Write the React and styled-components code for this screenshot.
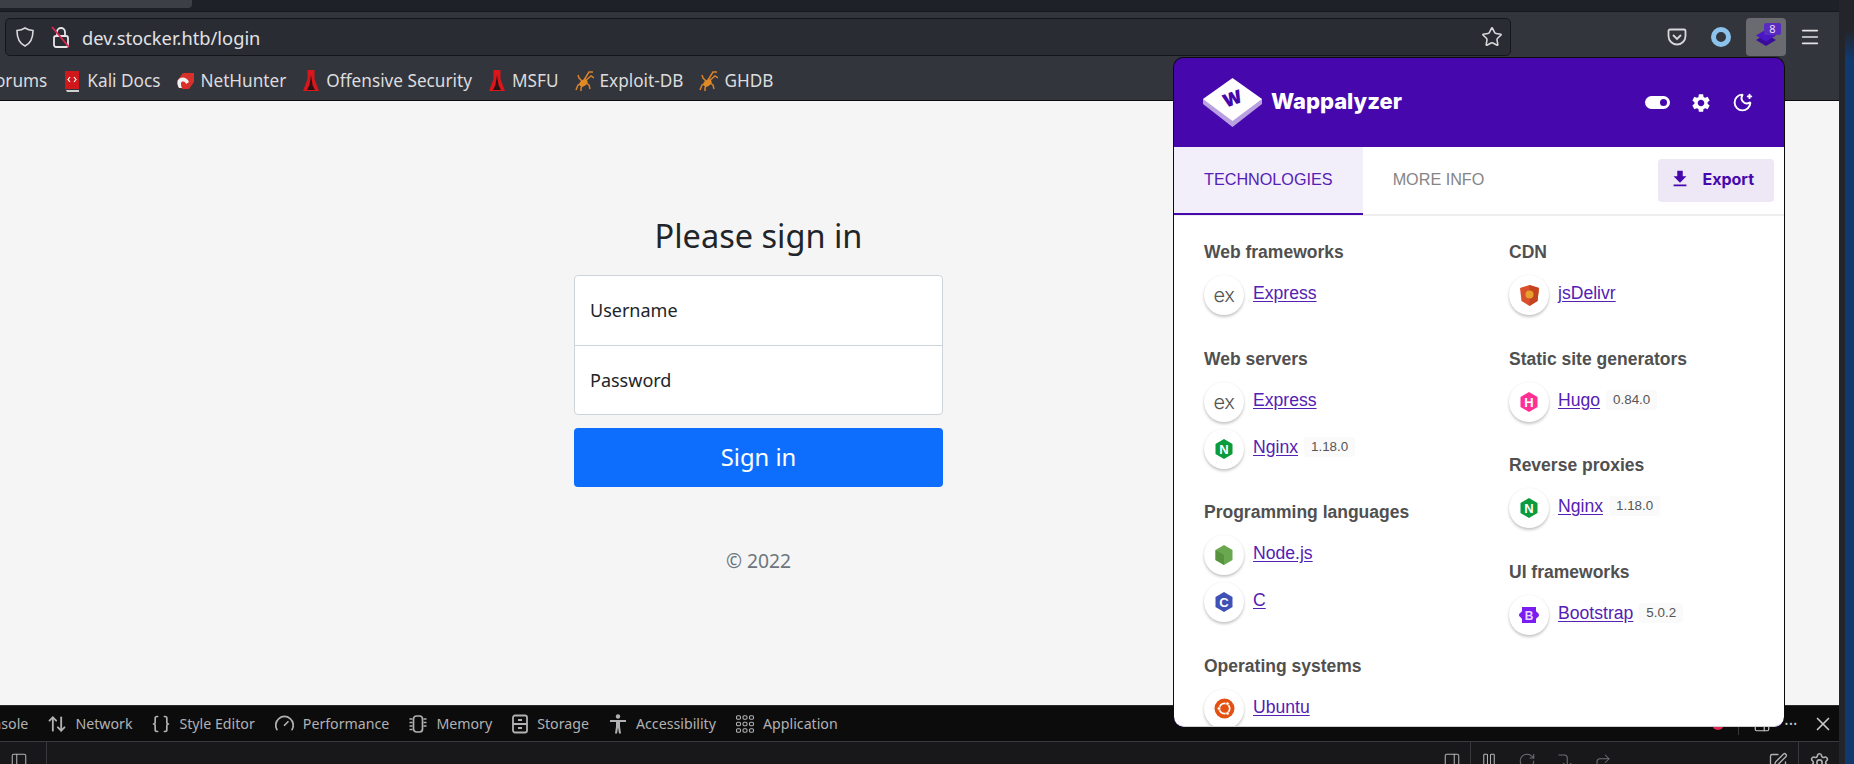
import React from "react";
import styled, { createGlobalStyle } from "styled-components";
import {
  ArrowUpDown,
  Braces,
  CornerRightDown,
  CornerUpRight,
  Gauge,
  Menu,
  MoonStar,
  PanelLeft,
  PanelRight,
  Pause,
  RotateCw,
  Settings,
  SquarePen,
  Star,
  X,
} from "lucide-react";

const GlobalStyle = createGlobalStyle`
  html, body {
    margin: 0;
    padding: 0;
    background: #0c0c0d;
    overflow: hidden;
  }
  * {
    box-sizing: border-box;
  }
`;

const PURPLE = "#4608ad";
const LINK = "#5520b4";
const UI_FONT = `"Noto Sans", "DejaVu Sans", sans-serif`;
const POPUP_FONT = `"Liberation Sans", Arial, sans-serif`;

const BookmarkIcon = ({ kind }) => {
  if (kind === "book") {
    return (
      <svg width="18" height="24" viewBox="0 0 18 24">
        <path d="M2 2h14v18H4a2 2 0 0 0-2 2z" fill="#d0171b" />
        <path d="M3 21h13v2H4z" fill="#cfcfcf" />
        <path d="M7 8l-2 2.500 2 2.500M11 8l2 2.500-2 2.500" stroke="#fff" strokeWidth="1.2" fill="none" />
      </svg>
    );
  }
  if (kind === "hunter") {
    return (
      <svg width="18" height="18" viewBox="0 0 18 18">
        <path d="M7 1h11v9l-5 7H6L1 9z" fill="#d9302c" />
        <path d="M2 8c3-4 9-3 11 2l-3 2c-1-3-4-3-5-1 0 2 0 3 1 5H3C1 13 1 10 2 8z" fill="#f2f2f2" />
      </svg>
    );
  }
  if (kind === "torch") {
    return (
      <svg width="18" height="24" viewBox="0 0 18 24">
        <path d="M5.500 1h7v9l4.500 12H1L5.500 10z" fill="#d8161b" />
        <path d="M9 6l1.500 10 2.500 5H5l2.500-5z" fill="#2a1214" />
      </svg>
    );
  }
  return (
    <svg width="19" height="22" viewBox="0 0 19 22">
      <g stroke="#d9822b" strokeWidth="1.500" fill="none">
        <path d="M9 10L14 2l4 0M10 11L16 6l3 2M8 13L3 15l-2 5M8 14l-2 4 0 3M11 13l3 2 1 4M7 11L4 8 3 5" />
      </g>
      <ellipse cx="8.500" cy="13" rx="4.500" ry="3" fill="#e08a24" transform="rotate(-35 8.500 13)" />
    </svg>
  );
};

const bookmarks = [
  { kind: "book", label: "Kali Docs" },
  { kind: "hunter", label: "NetHunter" },
  { kind: "torch", label: "Offensive Security" },
  { kind: "torch", label: "MSFU" },
  { kind: "spider", label: "Exploit-DB" },
  { kind: "spider", label: "GHDB" },
];

const MemoryIcon = () => (
  <svg width="20" height="20" viewBox="0 0 20 20" fill="none" stroke="currentColor" strokeWidth="1.700">
    <rect x="5.500" y="2" width="9" height="16" rx="3" />
    <path d="M1.500 5h3M1.500 8.500h3M1.500 12h3M1.500 15.500h3M15.500 5h3M15.500 8.500h3M15.500 12h3" strokeWidth="1.300" />
  </svg>
);

const StorageIcon = () => (
  <svg width="18" height="20" viewBox="0 0 18 20" fill="none" stroke="currentColor" strokeWidth="1.800">
    <rect x="2" y="1.500" width="14" height="17" rx="2" />
    <path d="M2 10h14M7 6h4M7 14h4" />
  </svg>
);

const PersonIcon = () => (
  <svg width="20" height="20" viewBox="0 0 20 20" fill="currentColor">
    <circle cx="10" cy="2.500" r="2.200" />
    <path d="M2 6h16v2h-6v4.500l1 7h-2l-1-6-1 6H7l1-7V8H2z" />
  </svg>
);

const AppGridIcon = () => (
  <svg width="20" height="20" viewBox="0 0 20 20" fill="none" stroke="currentColor" strokeWidth="1.100">
    {[3.500, 10, 16.500].map((y) =>
      [3.500, 10, 16.500].map((x) => <rect key={`${x}-${y}`} x={x - 2} y={y - 1.700} width="4" height="3.400" rx="1.200" />)
    )}
  </svg>
);

const devTabs = [
  { icon: <ArrowUpDown size={20} strokeWidth={2.200} />, label: "Network" },
  { icon: <Braces size={20} strokeWidth={2} />, label: "Style Editor" },
  { icon: <Gauge size={21} strokeWidth={2} />, label: "Performance" },
  { icon: <MemoryIcon />, label: "Memory" },
  { icon: <StorageIcon />, label: "Storage" },
  { icon: <PersonIcon />, label: "Accessibility" },
  { icon: <AppGridIcon />, label: "Application" },
];

const Hexagon = ({ fill, letter, color = "#fff" }) => (
  <svg width="20" height="22" viewBox="0 0 20 22">
    <path d="M10 1l8.500 5v10L10 21l-8.500-5V6z" fill={fill} />
    <text x="10" y="15.500" textAnchor="middle" fontSize="13" fontWeight="700" fontFamily="Liberation Sans" fill={color}>
      {letter}
    </text>
  </svg>
);

const TechIcon = ({ name }) => {
  switch (name) {
    case "Express":
      return <ExLogo>ex</ExLogo>;
    case "Nginx":
      return <Hexagon fill="#0a9b3c" letter="N" />;
    case "Node.js":
      return (
        <svg width="20" height="22" viewBox="0 0 20 22">
          <path d="M10 1l8.500 5v10L10 21l-8.500-5V6z" fill="#6aa84f" />
          <path d="M1.500 6L10 11v10l-8.500-5z" fill="#57933f" />
        </svg>
      );
    case "C":
      return <Hexagon fill="#3f51b5" letter="C" />;
    case "Ubuntu":
      return (
        <svg width="21" height="21" viewBox="0 0 21 21">
          <circle cx="10.500" cy="10.500" r="10" fill="#e4500f" />
          <circle cx="10.500" cy="10.500" r="5.200" fill="none" stroke="#fff" strokeWidth="1.700" />
          <circle cx="5" cy="10.500" r="1.700" fill="#fff" stroke="#e4500f" strokeWidth=".6" />
          <circle cx="13.500" cy="5.600" r="1.700" fill="#fff" stroke="#e4500f" strokeWidth=".6" />
          <circle cx="13.500" cy="15.400" r="1.700" fill="#fff" stroke="#e4500f" strokeWidth=".6" />
        </svg>
      );
    case "jsDelivr":
      return (
        <svg width="19" height="21" viewBox="0 0 19 21">
          <path d="M9.500 0L19 3l-1.500 13-8 5-8-5L0 3z" fill="#d9512c" />
          <path d="M9.500 0L19 3l-1.500 13-8 5z" fill="#c4441f" />
          <circle cx="9.500" cy="9.500" r="4" fill="#e8a02c" />
        </svg>
      );
    case "Hugo":
      return <Hexagon fill="#ff2f93" letter="H" />;
    default:
      return (
        <svg width="20" height="18" viewBox="0 0 20 18">
          <path d="M3 1h14v3.500c0 2 3 2 3 4.500s-3 2.500-3 4.500V17H3v-3.500c0-2-3-2.500-3-4.500s3-2.500 3-4.500z" fill="#7a1df0" />
          <text x="10" y="13.500" textAnchor="middle" fontSize="12" fontWeight="700" fontFamily="Liberation Sans" fill="#e8d8ff">
            B
          </text>
        </svg>
      );
  }
};

const leftColumn = [
  { title: "Web frameworks", items: [{ name: "Express" }] },
  { title: "Web servers", items: [{ name: "Express" }, { name: "Nginx", version: "1.18.0" }] },
  { title: "Programming languages", items: [{ name: "Node.js" }, { name: "C" }] },
  { title: "Operating systems", items: [{ name: "Ubuntu" }] },
];

const rightColumn = [
  { title: "CDN", items: [{ name: "jsDelivr" }] },
  { title: "Static site generators", items: [{ name: "Hugo", version: "0.84.0" }] },
  { title: "Reverse proxies", items: [{ name: "Nginx", version: "1.18.0" }] },
  { title: "UI frameworks", items: [{ name: "Bootstrap", version: "5.0.2" }] },
];

const TechColumn = ({ sections }) => (
  <Column>
    {sections.map((section) => (
      <section key={section.title}>
        <SectionTitle>{section.title}</SectionTitle>
        <Rows>
          {section.items.map((item) => (
            <TechRow key={item.name}>
              <IconDisc>
                <TechIcon name={item.name} />
              </IconDisc>
              <TechLink href="#">{item.name}</TechLink>
              {item.version && <Version>{item.version}</Version>}
            </TechRow>
          ))}
        </Rows>
      </section>
    ))}
  </Column>
);

const App = () => {
  return (
    <Screen>
      <GlobalStyle />
      <Browser>
        <TabStrip>
          <ActiveTab />
        </TabStrip>

        <NavBar>
          <UrlBar>
            <svg width="20" height="22" viewBox="0 0 20 22" fill="none" stroke="#d8d8da" strokeWidth="1.600">
              <path d="M10 2c2.500 1.600 5 2.300 8 2.500 0 7-1.500 12.500-8 15.500C3.500 17 2 11.500 2 4.500 5 4.300 7.500 3.600 10 2z" />
            </svg>
            <LockIcon width="20" height="24" viewBox="0 0 20 24" fill="none">
              <rect x="3" y="11" width="14" height="11" rx="2" stroke="#e6e6e8" strokeWidth="1.800" />
              <path d="M6 11V7a4 4 0 0 1 8 0v4" stroke="#e6e6e8" strokeWidth="1.800" />
              <path d="M1 2l17 20" stroke="#e22850" strokeWidth="1.800" />
            </LockIcon>
            <UrlText>dev.stocker.htb/login</UrlText>
            <Star size={22} color="#d8d8da" strokeWidth={1.700} />
          </UrlBar>
          <Toolbar>
            <svg width="20" height="18" viewBox="0 0 20 18" fill="none" stroke="#d8d8da" strokeWidth="1.800">
              <path d="M3 1.500h14a1.500 1.500 0 0 1 1.500 1.500v5a8.500 8.500 0 0 1-17 0V3A1.500 1.500 0 0 1 3 1.500z" />
              <path d="M6 7l4 4 4-4" />
            </svg>
            <Ring />
            <ExtensionButton>
              <svg width="22" height="22" viewBox="0 0 22 22">
                <path d="M1 13l10-6 10 6-10 6z" fill="#3a0c9c" />
                <path d="M1 8.500l10-6 10 6-10 6z" fill="#4b16c4" />
              </svg>
              <Badge>8</Badge>
            </ExtensionButton>
            <Menu size={22} color="#e4e4e6" strokeWidth={1.800} />
          </Toolbar>
        </NavBar>

        <BookmarksBar>
          <FirstBookmark>Forums</FirstBookmark>
          {bookmarks.map((bookmark) => (
            <Bookmark key={bookmark.label}>
              <BookmarkIcon kind={bookmark.kind} />
              {bookmark.label}
            </Bookmark>
          ))}
        </BookmarksBar>

        <Page>
          <SignInForm>
            <Heading>Please sign in</Heading>
            <FieldGroup>
              <Field>Username</Field>
              <Field>Password</Field>
            </FieldGroup>
            <SubmitButton>Sign in</SubmitButton>
            <Copyright>© 2022</Copyright>
          </SignInForm>
        </Page>

        <DevTabs>
          <FirstDevTab>Console</FirstDevTab>
          {devTabs.map((tab) => (
            <DevTab key={tab.label}>
              {tab.icon}
              {tab.label}
            </DevTab>
          ))}
          <DevTabActions>
            <ErrorDot />
            <DevDivider />
            <PanelRight size={18} strokeWidth={1.600} />
            <Dots>•••</Dots>
            <X size={22} strokeWidth={1.800} />
          </DevTabActions>
        </DevTabs>

        <DevToolbar>
          <ToolbarEdge>
            <PanelLeft size={18} strokeWidth={1.400} />
          </ToolbarEdge>
          <DebugControls>
            <PanelRight size={18} strokeWidth={1.400} />
            <DevDivider />
            <Steppers>
              <Pause size={18} strokeWidth={1.400} />
              <RotateCw size={18} strokeWidth={1.400} />
              <CornerRightDown size={18} strokeWidth={1.400} />
              <CornerUpRight size={18} strokeWidth={1.400} />
            </Steppers>
          </DebugControls>
          <ToolbarEnd>
            <SquarePen size={20} strokeWidth={1.600} />
            <DevDivider />
            <Settings size={21} strokeWidth={1.800} />
          </ToolbarEnd>
        </DevToolbar>

        <Popup>
          <PopupHeader>
            <LogoMark width="59" height="50" viewBox="0 0 59 50">
              <path d="M0 26V21h59v5L29.500 49z" fill="#b9a0e0" />
              <path d="M0 21L29.500 0 59 21 29.500 43z" fill="#fff" />
              <text
                x="29.500"
                y="27"
                textAnchor="middle"
                fontSize="18"
                fontWeight="900"
                fontFamily="Inter"
                fill={PURPLE}
                transform="rotate(-20 29.500 21)"
              >
                W
              </text>
            </LogoMark>
            <LogoText>Wappalyzer</LogoText>
            <HeaderActions>
              <Toggle />
              <svg width="22" height="22" viewBox="0 0 24 24" fill="#fff">
                <path d="M19.140 12.940c.04-.3.06-.61.06-.94 0-.32-.02-.64-.07-.94l2.030-1.580c.18-.14.23-.41.12-.61l-1.920-3.320c-.12-.22-.37-.29-.59-.22l-2.390.96c-.5-.38-1.030-.7-1.620-.94l-.36-2.540c-.04-.24-.24-.41-.48-.41h-3.840c-.24 0-.43.17-.47.41l-.36 2.540c-.59.24-1.130.57-1.620.94l-2.390-.96c-.22-.08-.47 0-.59.22L2.740 8.870c-.12.21-.08.47.12.61l2.030 1.580c-.05.3-.09.63-.09.94s.02.64.07.94l-2.030 1.580c-.18.14-.23.41-.12.61l1.920 3.320c.12.22.37.29.59.22l2.390-.96c.5.38 1.030.7 1.620.94l.36 2.540c.05.24.24.41.48.41h3.840c.24 0 .44-.17.47-.41l.36-2.540c.59-.24 1.130-.56 1.620-.94l2.390.96c.22.08.47 0 .59-.22l1.920-3.320c.12-.22.07-.47-.12-.61l-2.010-1.580zM12 15.600c-1.980 0-3.600-1.620-3.600-3.600s1.620-3.600 3.600-3.600 3.600 1.620 3.600 3.600-1.620 3.600-3.600 3.600z" />
              </svg>
              <MoonStar size={21} color="#fff" strokeWidth={2.200} />
            </HeaderActions>
          </PopupHeader>

          <PopupBody>
            <PopupTabs>
              <PopupTab $active>TECHNOLOGIES</PopupTab>
              <PopupTab>MORE INFO</PopupTab>
              <ExportButton>
                <svg width="22" height="22" viewBox="0 0 24 24" fill={PURPLE}>
                  <path d="M5 20h14v-2H5v2zM19 9h-4V3H9v6H5l7 7 7-7z" />
                </svg>
                Export
              </ExportButton>
            </PopupTabs>
            <Columns>
              <TechColumn sections={leftColumn} />
              <TechColumn sections={rightColumn} />
            </Columns>
          </PopupBody>
        </Popup>
      </Browser>
      <DesktopEdge />
    </Screen>
  );
};

export default App;

const Screen = styled.div`
  display: flex;
  width: 1854px;
  height: 764px;
  overflow: hidden;
  background: #24252b;
`;

const Browser = styled.div`
  position: relative;
  display: flex;
  flex: none;
  flex-direction: column;
  width: 1839px;
  height: 764px;
  overflow: hidden;
  font-family: ${UI_FONT};
`;

const DesktopEdge = styled.div`
  flex: none;
  width: 9px;
  margin-left: 6px;
  background: linear-gradient(#24252b 0, #24252b 30px, #103a6e 60px, #103a6e 100%);
`;

const TabStrip = styled.div`
  height: 12px;
  flex: none;
  background: #1f2128;
  border-bottom: 1px solid #17181d;
`;

const ActiveTab = styled.div`
  width: 192px;
  height: 8px;
  background: #3d3f47;
  border-bottom-right-radius: 4px;
`;

const NavBar = styled.div`
  display: flex;
  align-items: center;
  height: 45px;
  flex: none;
  padding: 6px 0 1px 5px;
  background: #33353c;
`;

const UrlBar = styled.div`
  display: flex;
  flex: none;
  align-items: center;
  width: 1506px;
  height: 38px;
  padding: 0 7px 0 9px;
  background: #2a2c34;
  border: 1px solid #15161b;
  border-radius: 5px;
`;

const LockIcon = styled.svg`
  margin-left: 16px;
`;

const UrlText = styled.span`
  flex: 1;
  margin-left: 11px;
  color: #e2e2e4;
  font-size: 18.300px;
`;

const Toolbar = styled.div`
  display: flex;
  align-items: center;
  gap: 24px;
  margin-left: 156px;
`;

const Ring = styled.span`
  width: 20px;
  height: 20px;
  border: 5px solid #8cc3ec;
  border-radius: 50%;
`;

const ExtensionButton = styled.div`
  position: relative;
  display: flex;
  align-items: flex-end;
  justify-content: center;
  width: 40px;
  height: 38px;
  margin: 0 -11px 0 -9px;
  padding-bottom: 7px;
  background: #6a6b70;
  border-radius: 4px;
`;

const Badge = styled.span`
  position: absolute;
  top: 5px;
  right: 5px;
  width: 17px;
  height: 12px;
  background: #5a2bc0;
  border-radius: 2px;
  color: #e6defa;
  font-size: 11px;
  line-height: 12px;
  text-align: center;
`;

const BookmarksBar = styled.div`
  display: flex;
  align-items: center;
  gap: 16px;
  height: 44px;
  flex: none;
  padding-top: 4px;
  background: #33353c;
  border-bottom: 1px solid #0c0c0d;
  color: #dcdcde;
  font-size: 17.200px;
  white-space: nowrap;
`;

const FirstBookmark = styled.span`
  margin-left: -14px;
`;

const Bookmark = styled.span`
  display: flex;
  align-items: center;
  gap: 6px;
`;

const Page = styled.main`
  flex: 1;
  padding: 117px 0 0 574px;
  background: #f5f5f5;
`;

const SignInForm = styled.div`
  display: flex;
  flex-direction: column;
  width: 369px;
  color: #212529;
  text-align: center;
`;

const Heading = styled.h1`
  margin: 0 0 21px;
  font-size: 32.500px;
  font-weight: 400;
  line-height: 36px;
`;

const FieldGroup = styled.div`
  background: #fff;
  border: 1px solid #ced4da;
  border-radius: 4px;
`;

const Field = styled.div`
  height: 69px;
  padding-left: 15px;
  font-size: 18px;
  line-height: 68px;
  text-align: left;

  & + & {
    border-top: 1px solid #ced4da;
  }
`;

const SubmitButton = styled.button`
  height: 59px;
  margin-top: 13px;
  padding: 0 0 2px;
  background: #0d6efd;
  border: 0;
  border-radius: 4px;
  color: #fff;
  font-family: inherit;
  font-size: 23.800px;
`;

const Copyright = styled.p`
  margin: 63px 0 0;
  color: #6c757d;
  font-size: 19.300px;
  line-height: 22px;
`;

const DevTabs = styled.div`
  display: flex;
  align-items: center;
  gap: 19px;
  height: 37px;
  flex: none;
  background: #0c0c0d;
  border-top: 1px solid #2a2a2e;
  border-bottom: 1px solid #38383d;
  color: #b1b1b3;
  font-size: 14.200px;
  white-space: nowrap;
`;

const FirstDevTab = styled.span`
  margin-left: -25px;
`;

const DevTab = styled.span`
  display: flex;
  align-items: center;
  gap: 8px;
`;

const DevTabActions = styled.div`
  display: flex;
  align-items: center;
  gap: 14px;
  margin-left: auto;
  padding-right: 5px;
  color: #c8c8ca;
`;

const ErrorDot = styled.span`
  width: 12px;
  height: 12px;
  background: #e22850;
  border-radius: 50%;
`;

const DevDivider = styled.span`
  width: 1px;
  height: 22px;
  background: #38383d;
`;

const Dots = styled.span`
  font-size: 9px;
  letter-spacing: 1px;
`;

const DevToolbar = styled.div`
  display: flex;
  align-items: flex-start;
  height: 22px;
  flex: none;
  overflow: hidden;
  background: #18181a;
  color: #b1b1b3;
`;

const ToolbarEdge = styled.div`
  width: 47px;
  height: 22px;
  margin-right: 1396px;
  padding: 10px 0 0 10px;
  border-right: 1px solid #38383d;
`;

const DebugControls = styled.div`
  display: flex;
  align-items: flex-start;
  gap: 9px;
  padding-top: 10px;

  > span {
    margin-top: -10px;
  }
`;

const Steppers = styled.div`
  display: flex;
  gap: 20px;
  color: #6f6f74;

  > :first-child {
    color: #b1b1b3;
  }
`;

const ToolbarEnd = styled.div`
  display: flex;
  align-items: flex-start;
  gap: 10px;
  margin-left: auto;
  padding: 10px 9px 0 0;

  > span {
    margin-top: -10px;
  }
`;

const Popup = styled.div`
  position: absolute;
  top: 57px;
  left: 1173px;
  display: flex;
  flex-direction: column;
  width: 612px;
  height: 670px;
  overflow: hidden;
  background: ${PURPLE};
  border: 1px solid #0c0c0d;
  border-bottom: 0;
  border-radius: 10px;
  font-family: ${POPUP_FONT};
`;

const PopupHeader = styled.header`
  display: flex;
  align-items: center;
  height: 89px;
  flex: none;
  padding: 0 31px 0 29px;
  color: #fff;
`;

const LogoMark = styled.svg`
  flex: none;
`;

const LogoText = styled.span`
  margin-left: 9px;
  padding-bottom: 4px;
  font-family: Inter, sans-serif;
  font-size: 22px;
  font-weight: 800;
`;

const HeaderActions = styled.div`
  display: flex;
  align-items: center;
  gap: 20px;
  margin-left: auto;
`;

const Toggle = styled.span`
  position: relative;
  width: 25px;
  height: 13px;
  background: #fff;
  border-radius: 7px;

  &::after {
    content: "";
    position: absolute;
    top: 3px;
    right: 3px;
    width: 7px;
    height: 7px;
    background: ${PURPLE};
    border-radius: 50%;
  }
`;

const PopupBody = styled.div`
  flex: 1;
  overflow: hidden;
  background: #fff;
  border-bottom: 1px solid #cfcfcf;
  border-radius: 0 0 10px 10px;
`;

const PopupTabs = styled.div`
  display: flex;
  align-items: stretch;
  height: 69px;
  border-bottom: 2px solid #eeeeee;
`;

const PopupTab = styled.div`
  display: flex;
  align-items: center;
  height: 68px;
  padding: 0 30px 2px;
  background: ${({ $active }) => ($active ? "#f2eefa" : "transparent")};
  border-bottom: 2px solid ${({ $active }) => ($active ? PURPLE : "transparent")};
  color: ${({ $active }) => ($active ? LINK : "#858585")};
  font-size: 16.200px;
`;

const ExportButton = styled.div`
  display: flex;
  align-items: center;
  gap: 11px;
  height: 43px;
  margin: 12px 10px 0 auto;
  padding: 0 20px 4px 11px;
  background: #ede7f6;
  border-radius: 4px;
  color: ${PURPLE};
  font-family: Inter, sans-serif;
  font-size: 16px;
  font-weight: 700;
`;

const Columns = styled.div`
  display: grid;
  grid-template-columns: 305px 1fr;
  padding: 24px 0 0 30px;
`;

const Column = styled.div`
  display: flex;
  flex-direction: column;
  gap: 31.500px;
`;

const SectionTitle = styled.h2`
  margin: 0 0 11px;
  color: #505050;
  font-size: 17.500px;
  font-weight: 700;
  line-height: 24px;
`;

const Rows = styled.div`
  display: flex;
  flex-direction: column;
  gap: 7px;
`;

const TechRow = styled.div`
  display: flex;
  align-items: flex-start;
`;

const IconDisc = styled.span`
  display: flex;
  align-items: center;
  justify-content: center;
  width: 40px;
  height: 40px;
  flex: none;
  margin-right: 9px;
  background: #fff;
  border-radius: 50%;
  box-shadow: 0 2px 3px rgba(0, 0, 0, 0.22), 0 0 2px rgba(0, 0, 0, 0.06);
`;

const ExLogo = styled.span`
  color: #555;
  font-family: Inter, sans-serif;
  font-size: 20px;
  font-weight: 300;
  letter-spacing: -0.5px;
  line-height: 1;
`;

const TechLink = styled.a`
  margin-top: 6px;
  color: ${LINK};
  font-size: 17.600px;
  line-height: 24px;
  text-underline-offset: 2px;
`;

const Version = styled.span`
  height: 20px;
  margin: 8px 0 0 6px;
  padding: 0 7px;
  background: #fafafa;
  border-radius: 3px;
  color: #555;
  font-size: 13.400px;
  line-height: 20px;
`;
